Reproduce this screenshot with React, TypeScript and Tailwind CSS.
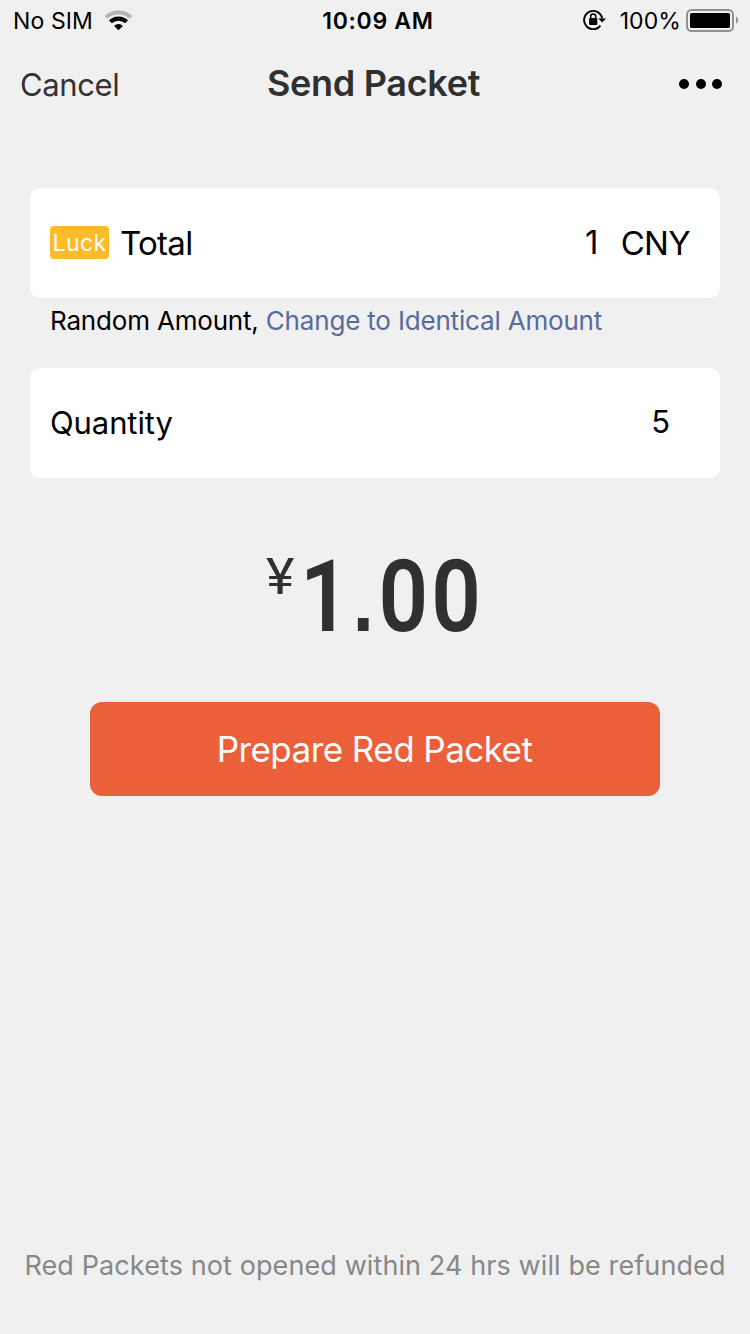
function WifiIcon() {
  return (
    <svg width="30" height="22" viewBox="0 0 30 22" fill="none">
      <path d="M2 8.4A18.4 18.4 0 0 1 27 8.4" stroke="#b4b4b4" strokeWidth="3.8" />
      <path d="M6.4 12.8A11.8 11.8 0 0 1 22.6 12.8" stroke="#000" strokeWidth="4.2" />
      <path d="M14.5 21.3L10.1 17A6.1 6.1 0 0 1 18.9 17Z" fill="#000" />
    </svg>
  );
}

function RotationLockIcon() {
  return (
    <svg width="24" height="22" viewBox="0 0 24 22" fill="none">
      <path d="M20.2 9.6A9.1 9.1 0 1 0 18.4 16.6" stroke="#000" strokeWidth="1.9" />
      <path d="M16.4 9.4H24L20.2 13.6Z" fill="#000" />
      <rect x="7.1" y="9" width="8.2" height="7" rx="0.9" fill="#000" />
      <path d="M8.7 9.5V7.4a2.5 2.5 0 0 1 5 0V9.5" stroke="#000" strokeWidth="1.5" />
    </svg>
  );
}

function BatteryIcon() {
  return (
    <svg width="54" height="24" viewBox="0 0 54 24" fill="none">
      <rect x="1" y="2" width="46" height="21" rx="4.5" stroke="#919191" strokeWidth="2" />
      <rect x="4" y="5" width="40" height="15" rx="1.6" fill="#000" />
      <path d="M50 8.6A4.2 4.2 0 0 1 50 16Z" fill="#919191" />
    </svg>
  );
}

function StatusBar() {
  return (
    <header className="grid h-10 grid-cols-3 items-center pr-[10px] pl-[13px] text-[23px] leading-[38px]">
      <div className="flex items-center gap-[11px]">
        <span className="mt-[2px] tracking-[0.1px]">No SIM</span>
        <WifiIcon />
      </div>
      <div className="mt-[2px] pl-[3px] text-center font-semibold tracking-[0.7px]">10:09 AM</div>
      <div className="flex items-center justify-end">
        <RotationLockIcon />
        <span className="mt-[2px] mr-[5px] ml-[14px] tracking-[0.1px]">100%</span>
        <BatteryIcon />
      </div>
    </header>
  );
}

function NavBar() {
  return (
    <nav className="grid h-[88px] grid-cols-[1fr_auto_1fr] items-center pr-6 pl-[20px] text-[#333]">
      <button className="mt-[2px] justify-self-start text-[31px] tracking-[-0.4px]">Cancel</button>
      <h1 className="mb-[2px] ml-px text-[36px] font-semibold tracking-[-0.3px] text-[#303030]">Send Packet</h1>
      <button className="flex gap-[6.5px] justify-self-end pr-1" aria-label="More">
        <i className="size-[10px] rounded-full bg-black" />
        <i className="size-[10px] rounded-full bg-black" />
        <i className="size-[10px] rounded-full bg-black" />
      </button>
    </nav>
  );
}

export default function App() {
  return (
    <div className="flex h-[1334px] w-[750px] flex-col bg-[#f0f0f0] font-['Inter',sans-serif] text-black">
      <StatusBar />
      <NavBar />
      <main className="flex flex-1 flex-col px-[30px] pt-[60px]">
        <section className="flex h-[110px] items-center rounded-[10px] bg-white pr-[30px] pl-5 text-[33px] tracking-[-0.7px]">
          <span className="mb-px flex h-[33px] w-[59px] items-center justify-center rounded-[4px] bg-[#ffbb29] pt-[2px] text-[23px] tracking-[0.4px] text-white">
            Luck
          </span>
          <span className="mt-[2px] ml-[11px]">Total</span>
          <span className="ml-auto">1</span>
          <span className="mt-[2px] ml-[23px]">CNY</span>
        </section>
        <p className="flex h-[70px] pt-[3px] pl-5 text-[26px] tracking-[-0.18px] whitespace-pre">
          <span>Random Amount, </span>
          <a className="text-[#576b9c]">Change to Identical Amount</a>
        </p>
        <section className="flex h-[110px] items-center justify-between rounded-[10px] bg-white pr-[50px] pl-5 text-[31px] tracking-[-0.1px]">
          <span>Quantity</span>
          <span className="mb-[2px]">5</span>
        </section>
        <div className="mt-[50px] flex h-[134px] items-start pl-[236px] font-['Roboto',sans-serif] text-[#303030]">
          <span className="mt-[19px] origin-left scale-x-[1.08] text-[50px] leading-[60px]">¥</span>
          <span className="mt-[2px] ml-[8px] origin-left scale-x-[0.86] text-[101px] leading-[134px] font-semibold tracking-[3.6px]">
            1<span className="mr-[2px] font-['Liberation_Sans',sans-serif] text-[88px] font-bold">.</span>00
          </span>
        </div>
        <button className="mx-[60px] mt-10 h-[94px] rounded-[12px] bg-[#eb5f3a] pr-[1px] text-[35px] tracking-[-0.55px] text-white">
          Prepare Red Packet
        </button>
        <footer className="-mx-5 mt-auto mb-[48px] text-center text-[27px] leading-[40px] tracking-[0.1px] whitespace-nowrap text-[#888]">
          Red Packets not opened within 24 hrs will be refunded
        </footer>
      </main>
    </div>
  );
}
